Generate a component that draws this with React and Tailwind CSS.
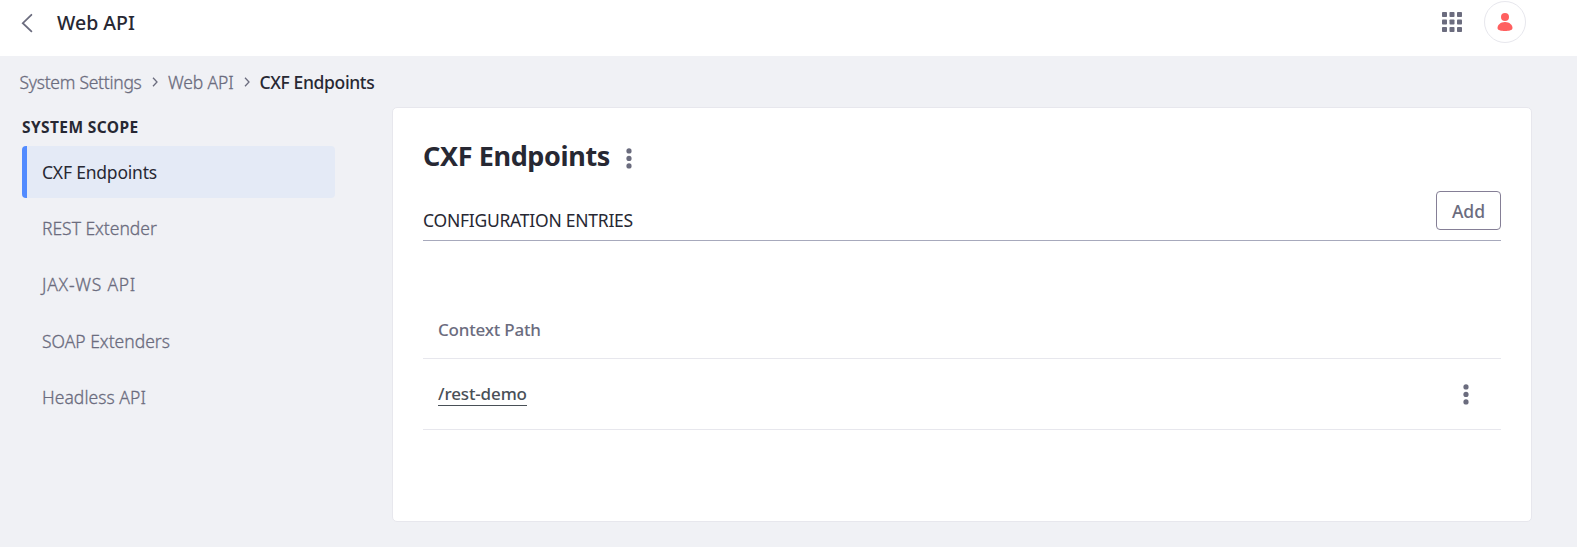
import React from 'react';

const navItems = [
  { label: 'REST Extender', style: 'tracking-[-0.03px] mt-[4px]' },
  { label: 'JAX-WS API', style: 'tracking-[0.75px] mt-[4px]' },
  { label: 'SOAP Extenders', style: 'tracking-[0px] mt-[5px]' },
  { label: 'Headless API', style: 'tracking-[0.05px] mt-[4px]' },
];

function Kebab() {
  return (
    <svg width="6" height="21" viewBox="0 0 6 21" fill="#6b6c7e" className="block">
      <circle cx="3" cy="2.9" r="2.6" />
      <circle cx="3" cy="10.4" r="2.6" />
      <circle cx="3" cy="17.9" r="2.6" />
    </svg>
  );
}

function Chevron() {
  return (
    <svg width="6" height="10" viewBox="0 0 6 10" fill="none" stroke="#6b6c7e" strokeWidth="1.3" className="block">
      <path d="M1 0.8 L5 5 L1 9.2" />
    </svg>
  );
}

function Header() {
  return (
    <header className="flex h-14 items-start bg-white">
      <svg width="12" height="20" viewBox="0 0 12 20" fill="none" stroke="#6b6c7e" strokeWidth="1.8" strokeLinecap="round" className="mt-[13px] ml-[21px]">
        <path d="M10.4 1.8 L1.8 10.2 L10.4 18.4" />
      </svg>
      <h1 className="mt-[9px] ml-[24px] text-[19.5px] leading-7 font-medium">Web API</h1>
      <div className="ml-auto flex items-start">
        <svg width="20" height="20" viewBox="0 0 20 20" fill="#6b6c7e" className="mt-3">
          {[0, 7.5, 15].map((y) => [0, 7.5, 15].map((x) => <rect key={`${x}-${y}`} x={x} y={y} width="5" height="5" rx="0.8" />))}
        </svg>
        <div className="mt-px mr-[51px] ml-[22px] flex size-[42px] items-center justify-center rounded-full border border-[#e7e7ed]">
          <svg width="16" height="18" viewBox="0 0 16 18" fill="#ff5f5f">
            <circle cx="8" cy="4" r="4" />
            <path d="M8 9 C12.5 9 15.5 12 15.5 15 C15.5 17.2 12 18 8 18 C4 18 0.5 17.2 0.5 15 C0.5 12 3.5 9 8 9Z" />
          </svg>
        </div>
      </div>
    </header>
  );
}

export default function App() {
  return (
    <div className="h-[547px] overflow-hidden bg-[#f0f1f5] font-['Noto_Sans','Open_Sans',sans-serif] whitespace-nowrap text-[#272833]">
      <Header />
      <nav className="flex h-[51px] items-start pt-[14px] pl-[19.5px] text-[17.5px] leading-6 text-[#6b6c7e]">
        <span className="w-[122.5px] font-light tracking-[-0.27px] [-webkit-text-stroke:0.3px_#6b6c7e]">System Settings</span>
        <span className="mt-[7px] ml-[10px]"><Chevron /></span>
        <span className="ml-[10px] w-[65px] font-light tracking-[-0.15px] [-webkit-text-stroke:0.3px_#6b6c7e]">Web API</span>
        <span className="mt-[7px] ml-[11px]"><Chevron /></span>
        <span className="ml-[9.5px] font-medium tracking-[-0.37px] text-[#272833]">CXF Endpoints</span>
      </nav>
      <div className="flex items-start">
        <aside className="w-[392px] pl-[22px]">
          <h2 className="mt-[8px] text-[15.5px] leading-6 font-bold tracking-[0.4px]">SYSTEM SCOPE</h2>
          <ul className="mt-[7px] w-[313px] text-[17.5px]">
            <li className="h-[52px] rounded border-l-[5px] border-[#528bff] bg-[#e4eaf6] pl-[15px] leading-[52px] tracking-[-0.2px]">CXF Endpoints</li>
            {navItems.map((item) => (
              <li key={item.label} className={`h-[52px] pl-5 leading-[52px] font-light text-[#6b6c7e] [-webkit-text-stroke:0.3px_#6b6c7e] ${item.style}`}>{item.label}</li>
            ))}
          </ul>
        </aside>
        <main className="h-[415px] w-[1140px] rounded-[5px] border border-[#e7e7ed] bg-white px-[30px]">
          <div className="mt-[30px] flex items-center">
            <h2 className="w-[187px] text-[27px] leading-9 font-bold tracking-[-0.38px]">CXF Endpoints</h2>
            <span className="mt-[4px] ml-[16px]"><Kebab /></span>
          </div>
          <div className="mt-[17px] flex h-[50px] items-start justify-between border-b border-[#a7a9bc]">
            <h3 className="mt-[17px] text-[17.5px] leading-6 tracking-[-0.25px]">CONFIGURATION ENTRIES</h3>
            <button className="h-[39px] w-[65px] rounded border border-[#857f96] pt-[2px] text-[17.5px] font-medium text-[#6b6c7e]">Add</button>
          </div>
          <div className="mt-[60px] flex h-[58px] items-center border-b border-[#e7e7ed] pl-[15px] text-[17px] font-medium tracking-[-0.2px] text-[#6b6c7e]">Context Path</div>
          <div className="flex h-[71px] items-center justify-between border-b border-[#e7e7ed] pr-[32px] pl-[15px]">
            <a className="border-b border-[#495057] text-[17px] leading-[22px] font-medium tracking-[-0.13px] text-[#495057]">/rest-demo</a>
            <Kebab />
          </div>
        </main>
      </div>
    </div>
  );
}
